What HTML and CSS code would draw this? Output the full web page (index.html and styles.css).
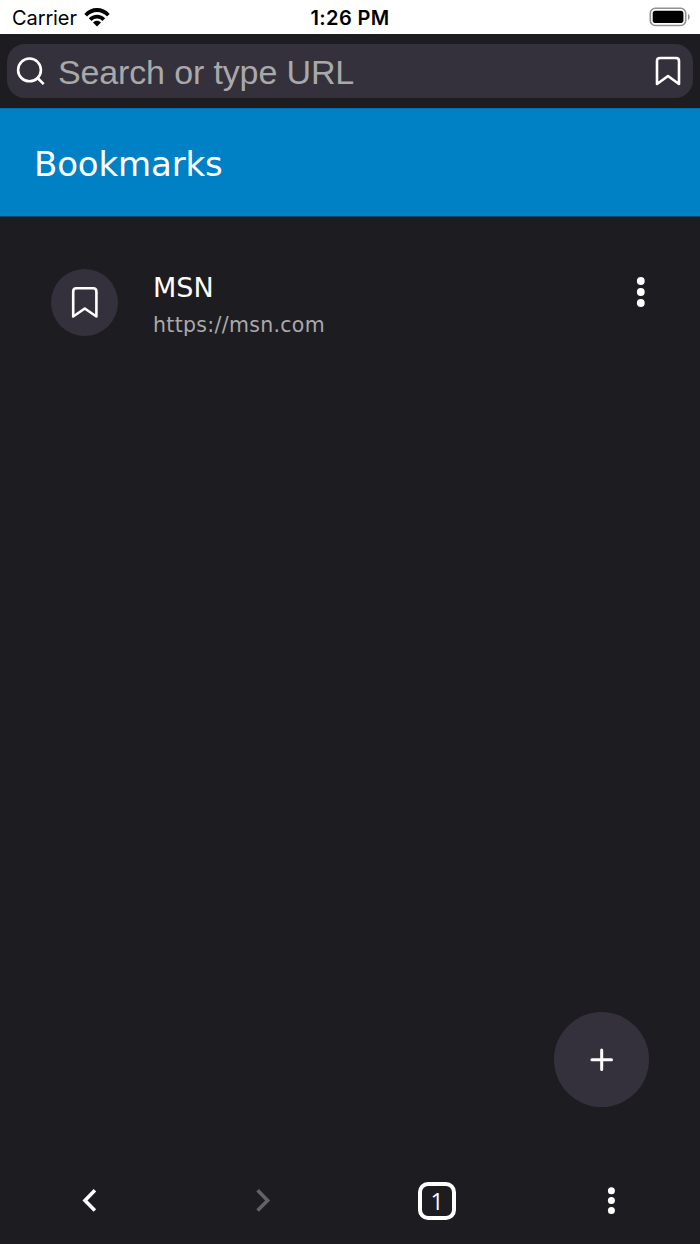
FILE: index.html
```
<!DOCTYPE html>
<html lang="en">

<head>
    <meta charset="UTF-8">
    <meta name="viewport" content="width=device-width, initial-scale=1">
    <title>Bookmarks</title>
    <link rel="stylesheet" href="styles.css">
</head>

<body>

    <div class="status-bar">
        <div class="carrier">
            <span class="carrier-name">Carrier</span>
            <svg width="26" height="19" viewBox="0 0 26 19">
                <path d="M0.3 5.9C7 -1.9 19 -1.9 25.7 5.9L23 8.6C17.5 2.6 8.5 2.6 3 8.6Z" />
                <path d="M4.8 10.3C9.2 5.4 16.8 5.4 21.2 10.3L18.4 13C15.4 9.7 10.6 9.7 7.6 13Z" />
                <path d="M9 14.5C11.2 12.3 14.8 12.3 17 14.5L13 18.5Z" />
            </svg>
        </div>
        <span class="time">1:26 PM</span>
        <svg class="battery" width="42" height="20" viewBox="0 0 42 20">
            <rect x="1.3" y="1.3" width="35.4" height="17.2" rx="5" fill="none" stroke="#929292" stroke-width="1.6" />
            <rect x="3.7" y="3.7" width="30.7" height="12.4" rx="2.8" />
            <path d="M39 7V13C41.2 12 41.2 8 39 7Z" fill="#929292" />
        </svg>
    </div>

    <div class="toolbar">
        <div class="search">
            <svg class="search-icon" width="30" height="30" viewBox="0 0 30 30">
                <circle cx="13.5" cy="13.9" r="11.4" />
                <path d="M21.6 22L27.7 28.1" />
            </svg>
            <span class="placeholder">Search or type URL</span>
            <svg class="save-icon" width="26" height="30" viewBox="0 0 26 30">
                <path d="M2 28V5Q2 2 5 2H21Q24 2 24 5V28L13 20Z" />
            </svg>
        </div>
    </div>

    <div class="header">
        <h1>Bookmarks</h1>
    </div>

    <div class="list">
        <div class="bookmark">
            <div class="bookmark-icon">
                <svg width="28" height="33" viewBox="0 0 28 33">
                    <path d="M2.2 30.5V5.4Q2.2 2.2 5.4 2.2H22.2Q25.4 2.2 25.4 5.4V30.5L13.8 22.5Z" />
                </svg>
            </div>
            <div class="bookmark-text">
                <div class="title">MSN</div>
                <div class="url">https://msn.com</div>
            </div>
            <svg class="dots" width="10" height="32" viewBox="0 0 10 32">
                <circle cx="4.8" cy="5" r="3.9" />
                <circle cx="4.8" cy="16" r="3.9" />
                <circle cx="4.8" cy="27" r="3.9" />
            </svg>
        </div>
    </div>

    <div class="add">
        <svg width="26" height="26" viewBox="0 0 26 26">
            <path d="M12.7 2.9V22.5M2.9 12.7H22.5" />
        </svg>
    </div>

    <div class="nav">
        <div class="nav-item">
            <svg class="back" width="20" height="28" viewBox="0 0 20 28">
                <path d="M15.9 3.3L6 13.4L15.9 23.5" />
            </svg>
        </div>
        <div class="nav-item disabled">
            <svg width="20" height="28" viewBox="0 0 20 28">
                <path d="M4.6 3.3L14.6 13.4L4.6 23.5" />
            </svg>
        </div>
        <div class="nav-item">
            <div class="tab-count">1</div>
        </div>
        <div class="nav-item">
            <svg class="dots" width="10" height="30" viewBox="0 0 10 30">
                <circle cx="5.4" cy="4.8" r="3.5" />
                <circle cx="5.4" cy="14.6" r="3.5" />
                <circle cx="5.4" cy="24.5" r="3.5" />
            </svg>
        </div>
    </div>

</body>

</html>
```

FILE: styles.css
```
* {
    box-sizing: border-box;
}

body {
    display: flex;
    flex-direction: column;
    height: 100vh;
    margin: 0;
    background-color: #1d1c21;
    color: #fff;
    font-family: "DejaVu Sans", Verdana, sans-serif;
}

svg {
    display: block;
    flex: none;
}

.status-bar {
    display: grid;
    grid-template-columns: 1fr auto 1fr;
    align-items: center;
    height: 34px;
    padding: 0 9px 0 12px;
    background-color: #fff;
    color: #000;
    font-family: Inter, sans-serif;
    font-size: 20px;
}

.carrier {
    display: flex;
    align-items: center;
    gap: 8px;
}

.carrier-name {
    width: 64px;
    padding-top: 2px;
    white-space: nowrap;
    letter-spacing: -0.1px;
}

.time {
    padding: 2px 3px 0 0;
    font-weight: 600;
    letter-spacing: 0.35px;
}

.battery {
    justify-self: end;
}

.toolbar {
    height: 74px;
    padding: 10px 7px;
}

.search {
    display: flex;
    align-items: center;
    height: 54px;
    padding: 0 12px 0 9px;
    border-radius: 18px;
    background-color: #34313c;
}

.search svg,
.bookmark-icon svg {
    fill: none;
    stroke: #fff;
    stroke-width: 2.6;
    stroke-linejoin: round;
}

.placeholder {
    flex: 1;
    margin-left: 12px;
    padding-top: 1px;
    color: #a9a9a9;
    font-family: "Liberation Sans", Arial, sans-serif;
    font-size: 34px;
    line-height: 40px;
    letter-spacing: -0.14px;
}

.header {
    display: flex;
    align-items: center;
    height: 109px;
    padding: 2px 0 0 34px;
    border-top: 1px solid #0770a8;
    border-bottom: 1px solid #12496a;
    background-color: #0081c6;
}

.header h1 {
    margin: 0;
    font-size: 34px;
    font-weight: 400;
    letter-spacing: -0.15px;
}

.list {
    flex: 1;
    padding: 51px 54px 0 51px;
}

.bookmark {
    display: flex;
}

.bookmark-icon {
    display: flex;
    align-items: center;
    justify-content: center;
    width: 67px;
    height: 67px;
    margin-top: 1px;
    border-radius: 50%;
    background-color: #34313c;
}

.bookmark-text {
    flex: 1;
    margin-left: 35px;
    padding-top: 1px;
}

.title {
    font-size: 27px;
    line-height: 38px;
}

.url {
    color: #a9a9a9;
    font-size: 20.5px;
    line-height: 36px;
    letter-spacing: 0.3px;
}

.dots {
    fill: #fff;
}

.bookmark .dots {
    margin-top: 8px;
}

.add {
    display: flex;
    align-items: center;
    justify-content: center;
    align-self: flex-end;
    width: 95px;
    height: 95px;
    margin: 0 51px 50px 0;
    border-radius: 50%;
    background-color: #34313c;
}

.add svg {
    fill: none;
    stroke: #fff;
    stroke-width: 3;
    stroke-linecap: round;
}

.nav {
    display: grid;
    grid-template-columns: repeat(4, 174px);
    justify-content: center;
    height: 87px;
}

.nav-item {
    display: flex;
    align-items: center;
    justify-content: center;
}

.nav-item path {
    fill: none;
    stroke: #fff;
    stroke-width: 3.6;
}

.disabled path {
    stroke: #646267;
}

.tab-count {
    width: 38px;
    height: 38px;
    border: 4px solid #fff;
    border-radius: 10px;
    font-family: "Open Sans", sans-serif;
    font-size: 23px;
    font-weight: 400;
    line-height: 30px;
    text-align: center;
}
```
